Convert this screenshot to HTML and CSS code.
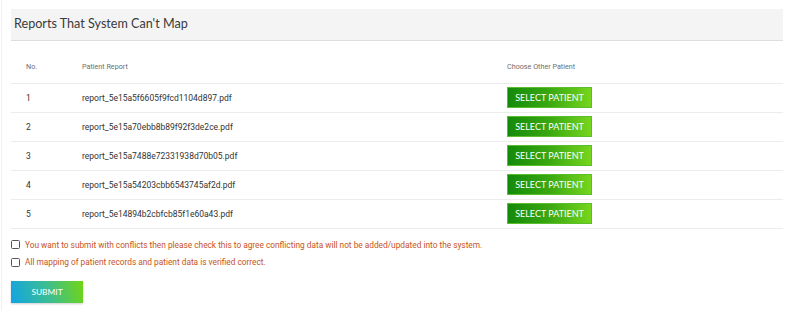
FILE: index.html
```html
<!DOCTYPE html>
<html lang="en">
<head>
  <meta charset="UTF-8">
  <title>Reports That System Can't Map</title>
  <link rel="stylesheet" href="styles.css">
</head>
<body>
  <div class="card">
    <div class="card-head">
      <h2 class="card-title">Reports That System Can't Map</h2>
    </div>
    <table class="map-table">
      <colgroup>
        <col style="width:71px;">
        <col style="width:425px;">
        <col>
      </colgroup>
      <thead>
        <tr>
          <th class="col-no">No.</th>
          <th>Patient Report</th>
          <th>Choose Other Patient</th>
        </tr>
      </thead>
      <tbody>
        <tr>
          <td class="col-no">1</td>
          <td>report_5e15a5f6605f9fcd1104d897.pdf</td>
          <td><button class="select-btn">SELECT PATIENT</button></td>
        </tr>
        <tr>
          <td class="col-no">2</td>
          <td>report_5e15a70ebb8b89f92f3de2ce.pdf</td>
          <td><button class="select-btn">SELECT PATIENT</button></td>
        </tr>
        <tr>
          <td class="col-no">3</td>
          <td>report_5e15a7488e72331938d70b05.pdf</td>
          <td><button class="select-btn">SELECT PATIENT</button></td>
        </tr>
        <tr>
          <td class="col-no">4</td>
          <td>report_5e15a54203cbb6543745af2d.pdf</td>
          <td><button class="select-btn">SELECT PATIENT</button></td>
        </tr>
        <tr>
          <td class="col-no">5</td>
          <td>report_5e14894b2cbfcb85f1e60a43.pdf</td>
          <td><button class="select-btn">SELECT PATIENT</button></td>
        </tr>
      </tbody>
    </table>
    <div class="checks">
      <label class="check-row">
        <input type="checkbox" class="check-box">
        <span>You want to submit with conflicts then please check this to agree conflicting data will not be added/updated into the system.</span>
      </label>
      <label class="check-row">
        <input type="checkbox" class="check-box">
        <span>All mapping of patient records and patient data is verified correct.</span>
      </label>
    </div>
    <button class="submit-btn">SUBMIT</button>
  </div>
</body>
</html>
```

FILE: styles.css
```css
body {
  margin: 0;
  background: #fff;
  font-family: Roboto, 'Liberation Sans', Arial, sans-serif;
}
.card {
  width: 772px;
  margin-left: 1px;
  padding: 9px 0 8px 9px;
  background: #fff;
  border-left: 1px solid #f0f0f0;
  box-shadow: 0 1px 0 #c8c8c8;
}
.card-head {
  height: 31px;
  background: #f4f4f4;
  border-bottom: 1px solid #dedede;
}
.card-title {
  margin: 0;
  padding-left: 3px;
  font-family: Lato, 'Open Sans', sans-serif;
  font-weight: 400;
  font-size: 12.6px;
  line-height: 30px;
  color: #3a3a3a;
}
/* Table */
.map-table {
  width: 100%;
  table-layout: fixed;
  border-collapse: collapse;
}
.map-table th {
  padding: 19px 0 9px;
  line-height: 14px;
  text-align: left;
  font-weight: 400;
  font-size: 7.2px;
  color: #6e6e6e;
  border-bottom: 1px solid #ececec;
}
.map-table td {
  height: 21px;
  padding: 3px 0 4px;
  font-size: 8.5px;
  color: #333;
  border-bottom: 1.5px solid #ececec;
}
.map-table .col-no {
  padding-left: 15px;
}
.select-btn {
  display: block;
  width: 85px;
  height: 21px;
  padding: 0;
  border: 1px solid #5cbd2a;
  background: linear-gradient(90deg, #138a0a 0%, #3aa811 50%, #76d61e 100%);
  color: #fff;
  font-family: Lato, 'Open Sans', sans-serif;
  font-weight: 400;
  font-size: 9px;
  cursor: pointer;
}
/* Agreement checks */
.checks {
  margin-top: 7px;
}
.check-row {
  display: flex;
  align-items: center;
  gap: 5px;
  height: 17.5px;
  font-size: 8.3px;
  color: #c6531d;
}
.check-box {
  appearance: none;
  margin: 0;
  width: 9px;
  height: 9px;
  border: 1.4px solid #555;
  border-radius: 1.5px;
  background: #fff;
}
.submit-btn {
  display: block;
  margin-top: 10px;
  width: 72px;
  height: 22px;
  padding: 0;
  border: none;
  background: linear-gradient(75deg, #10a4e4 0%, #3bbd95 50%, #72d512 100%);
  box-shadow: 0 1px 2px #0003;
  color: #fff;
  font-family: Lato, 'Open Sans', sans-serif;
  font-size: 8.4px;
  cursor: pointer;
}
```
